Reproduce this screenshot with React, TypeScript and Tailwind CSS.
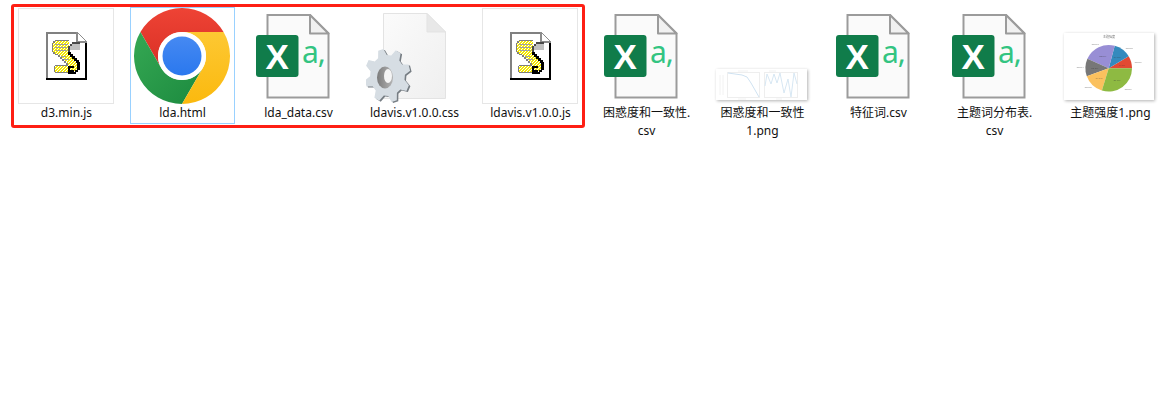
const cjk = "font-['Noto_Sans','Noto_Sans_CJK_SC',sans-serif]";

type Kind = "script" | "chrome" | "excel" | "gear" | "plots" | "pie";

const files: { kind: Kind; lines: string[] }[] = [
  { kind: "script", lines: ["d3.min.js"] },
  { kind: "chrome", lines: ["lda.html"] },
  { kind: "excel", lines: ["lda_data.csv"] },
  { kind: "gear", lines: ["ldavis.v1.0.0.css"] },
  { kind: "script", lines: ["ldavis.v1.0.0.js"] },
  { kind: "excel", lines: ["困惑度和一致性.", "csv"] },
  { kind: "plots", lines: ["困惑度和一致性", "1.png"] },
  { kind: "excel", lines: ["特征词.csv"] },
  { kind: "excel", lines: ["主题词分布表.", "csv"] },
  { kind: "pie", lines: ["主题强度1.png"] },
];

function ScriptIcon() {
  return (
    <div className="h-[96px] w-[96px] border border-[#e6e6e6] bg-white">
      <svg width="94" height="94" viewBox="1 1 94 94" shapeRendering="crispEdges">
        <defs>
          <pattern id="dither" width="3" height="3" patternUnits="userSpaceOnUse">
            <rect width="3" height="3" fill="#ffffff" />
            <rect width="2" height="1" fill="#f5e900" />
            <rect x="2" y="1" width="1" height="1" fill="#f5e900" />
            <rect y="1" width="1" height="1" fill="#f5e900" />
            <rect x="1" y="2" width="2" height="1" fill="#f5e900" />
          </pattern>
        </defs>
        {/* page */}
        <path d="M28 24H59L69 34V72H28Z" fill="#ffffff" />
        <path d="M28 24H59V26H30V70H28Z" fill="#808080" />
        <path d="M67 34H69V72H28V70H67Z" fill="#000000" />
        <path d="M59 24H60V25H61V26H62V27H63V28H64V29H65V30H66V31H67V32H68V33H69V35H58V24Z" fill="#8c8c8c" />
        <path d="M60 26H61V27H62V28H63V29H64V30H65V31H66V32H67V33H60Z" fill="#ffffff" />
        {/* scroll body */}
        <path d="M35 33H51V44L60 54V64H37V58H50V56L40 46H35Z" fill="url(#dither)" />
        <path d="M37 36H50V37H37ZM37 39H49V40H37ZM38 42H49V43H38ZM43 48H48V49H43ZM46 51H51V52H46Z" fill="#a0a0a0" />
        <path d="M37 32H51V33H37ZM35 33H37V35H35ZM34 35H35V44H34ZM35 44H37V46H35ZM37 46H40V47H37ZM40 47H42V49H40ZM42 49H44V51H42ZM44 51H46V53H44ZM46 53H48V55H46ZM48 55H50V57H48ZM37 57H50V58H37ZM36 58H37V64H36ZM37 64H50V65H37Z" fill="#808080" />
        {/* curl at the top right */}
        <path d="M52 38H54V36H62V42H52Z" fill="#c0c0c0" />
        <path d="M50 38H52V36H54V34H62V36H54V38H52V45H50Z" fill="#4a4a4a" />
        {/* black edge of the S */}
        <path d="M50 44H53V46H55V48H57V50H59V52H61V54H62V62H60V64H58V66H50V64H57V62H59V55H58V53H56V51H54V49H52V47H50Z" fill="#000000" />
        <path d="M50 58H56V60H52V62H56V64H50Z" fill="#000000" />
      </svg>
    </div>
  );
}

function ChromeIcon() {
  const c = 48;
  const dx = 41.57;
  const ix = 20.78;
  return (
    <svg width="96" height="96" viewBox="0 0 96 96">
      <defs>
        <linearGradient id="chromeRed" x1="0" y1="0" x2="0" y2="1">
          <stop offset="0" stopColor="#ee4335" />
          <stop offset="1" stopColor="#d93025" />
        </linearGradient>
        <linearGradient id="chromeGreen" x1="0" y1="0" x2="1" y2="1">
          <stop offset="0" stopColor="#35a853" />
          <stop offset="1" stopColor="#1c8a3f" />
        </linearGradient>
        <linearGradient id="chromeYellow" x1="0" y1="0" x2="0" y2="1">
          <stop offset="0" stopColor="#fdc833" />
          <stop offset="1" stopColor="#fbb90e" />
        </linearGradient>
        <linearGradient id="chromeBlue" x1="0" y1="0" x2="0" y2="1">
          <stop offset="0" stopColor="#4689f2" />
          <stop offset="1" stopColor="#2a78ee" />
        </linearGradient>
      </defs>
      <path
        d={`M${c - dx} ${c - 24}A48 48 0 0 1 ${c + dx} ${c - 24}L${c} ${c - 24}A24 24 0 0 0 ${c - ix} ${c + 12}Z`}
        fill="url(#chromeRed)"
      />
      <path
        d={`M${c - dx} ${c - 24}A48 48 0 0 0 ${c} ${c + 48}L${c + ix} ${c + 12}A24 24 0 0 1 ${c - ix} ${c + 12}Z`}
        fill="url(#chromeGreen)"
      />
      <path
        d={`M${c + dx} ${c - 24}A48 48 0 0 1 ${c} ${c + 48}L${c + ix} ${c + 12}A24 24 0 0 0 ${c} ${c - 24}Z`}
        fill="url(#chromeYellow)"
      />
      <circle cx={c} cy={c} r="24" fill="#ffffff" />
      <circle cx={c} cy={c} r="19.5" fill="url(#chromeBlue)" />
    </svg>
  );
}

function ExcelIcon() {
  return (
    <svg width="96" height="96" viewBox="0 0 96 96">
      <path d="M17.5 7H60L78.5 25.5V89.5H17.5Z" fill="#fafafa" stroke="#9b9b9b" strokeWidth="2" />
      <path d="M60 7V25.5H78.5Z" fill="#f1f1f1" stroke="#9b9b9b" strokeWidth="2" strokeLinejoin="round" />
      <rect x="6" y="27" width="42.5" height="42" rx="3" fill="#107c4a" />
      <text
        x="27.3"
        y="60.5"
        textAnchor="middle"
        className="fill-white font-['Liberation_Sans',sans-serif] text-[35px] font-bold"
      >
        X
      </text>
      <text
        x="52"
        y="55"
        className="fill-[#33c481] font-['Noto_Sans',sans-serif] text-[30px] tracking-[-1px]"
      >
        a,
      </text>
    </svg>
  );
}

function gearPath(cx: number, cy: number, outer: number, inner: number, teeth: number) {
  const pts: string[] = [];
  const step = (Math.PI * 2) / teeth;
  for (let i = 0; i < teeth; i++) {
    const a = i * step - Math.PI / 2 - 0.18;
    const offs: [number, number][] = [
      [-0.5, inner],
      [-0.3, outer],
      [0.0, outer],
      [0.18, inner],
    ];
    offs.forEach(([o, r]) => {
      const t = a + o * step;
      pts.push(`${(cx + Math.cos(t) * r * 0.85).toFixed(1)} ${(cy + Math.sin(t) * r).toFixed(1)}`);
    });
  }
  return `M${pts.join("L")}Z`;
}

function GearIcon() {
  return (
    <svg width="96" height="96" viewBox="0 0 96 96">
      <defs>
        <linearGradient id="pageFill" x1="0" y1="0" x2="1" y2="1">
          <stop offset="0" stopColor="#fbfbfb" />
          <stop offset="1" stopColor="#efefef" />
        </linearGradient>
        <linearGradient id="holeFill" x1="0" y1="0" x2="1" y2="0">
          <stop offset="0" stopColor="#7c7c7c" />
          <stop offset="1" stopColor="#b4b4b4" />
        </linearGradient>
      </defs>
      <path d="M17.5 5.5H61L79.5 24V90.5H17.5Z" fill="url(#pageFill)" stroke="#e3e3e3" />
      <path d="M61 5.5V24H79.5Z" fill="#e8e8e8" stroke="#e3e3e3" />
      <path d={gearPath(23, 68.5, 27, 20.5, 8)} fill="#767d83" />
      <path d={gearPath(21.5, 67.5, 27, 20.5, 8)} fill="#d6dde3" />
      <ellipse cx="19" cy="69.5" rx="8" ry="11" fill="url(#holeFill)" />
      <ellipse cx="22" cy="68" rx="4" ry="7" fill="#f4f4f4" />
    </svg>
  );
}

function PlotsThumb() {
  return (
    <div className="mr-[1px] bg-white shadow-[1px_1px_3px_rgba(0,0,0,0.3)]">
      <svg width="91" height="31" viewBox="0 0 91 31" className="blur-[0.4px]">
        <rect x="11.5" y="3.5" width="32" height="25" fill="none" stroke="#eeeeee" />
        <rect x="48.5" y="3.5" width="33" height="25" fill="none" stroke="#eeeeee" />
        <path d="M12 4L19 5L26 6L31 8L35 14L39 21L43 28" fill="none" stroke="#cfe2f1" />
        <path d="M49 17L51 5L55 15L58 5L61 14L64 4L68 24L72 10L75 28L78 4L81 15" fill="none" stroke="#d7e7f3" />
        <path d="M4 6V26M7 6V26M53 2H60M22 2H32M22 30H30M60 30H66" stroke="#f2f2f2" />
      </svg>
    </div>
  );
}

function slice(cx: number, cy: number, r: number, from: number, to: number) {
  const p = (deg: number) =>
    `${(cx + Math.cos((deg * Math.PI) / 180) * r).toFixed(2)} ${(cy - Math.sin((deg * Math.PI) / 180) * r).toFixed(2)}`;
  const large = to - from > 180 ? 1 : 0;
  return `M${cx} ${cy}L${p(from)}A${r} ${r} 0 ${large} 0 ${p(to)}Z`;
}

const pieSlices = [
  { from: 0, to: 31, color: "#e24a33", pct: "6.4%" },
  { from: 31, to: 75, color: "#348abd", pct: "14.3%" },
  { from: 75, to: 156, color: "#988ed5", pct: "22.5%" },
  { from: 156, to: 200, color: "#777777", pct: "12.1%" },
  { from: 200, to: 253, color: "#fbc15e", pct: "14.7%" },
  { from: 253, to: 360, color: "#8eba42", pct: "29.7%" },
];

const pieLabels = [
  { x: 74, y: 30, text: "Topic1" },
  { x: 65, y: 16, text: "Topic2" },
  { x: 31, y: 12, text: "Topic3" },
  { x: 16, y: 35, text: "Topic4" },
  { x: 24, y: 55, text: "Topic5" },
  { x: 64, y: 57, text: "Topic6" },
];

function PieThumb() {
  const cx = 44.7;
  const cy = 35.3;
  return (
    <div className="mr-[2px] bg-white shadow-[1px_1px_3px_rgba(0,0,0,0.3)]">
      <svg width="90" height="67" viewBox="0 0 90 67" className="blur-[0.4px]">
        <text x="45" y="4.5" textAnchor="middle" className={`fill-[#777777] text-[3px] ${cjk}`}>
          主题强度
        </text>
        {pieSlices.map((s) => {
          const mid = (((s.from + s.to) / 2) * Math.PI) / 180;
          return (
            <g key={s.from}>
              <path d={slice(cx, cy, 23.3, s.from, s.to)} fill={s.color} />
              <text
                x={cx + Math.cos(mid) * 14}
                y={cy - Math.sin(mid) * 14 + 1}
                textAnchor="middle"
                className="fill-[#333333] font-['Liberation_Sans',sans-serif] text-[2.5px] opacity-60"
              >
                {s.pct}
              </text>
            </g>
          );
        })}
        {pieLabels.map((l) => (
          <text
            key={l.text}
            x={l.x}
            y={l.y}
            textAnchor="middle"
            className="fill-[#888888] font-['Liberation_Sans',sans-serif] text-[2.5px]"
          >
            {l.text}
          </text>
        ))}
      </svg>
    </div>
  );
}

function FileIcon({ kind }: { kind: Kind }) {
  if (kind === "script") return <ScriptIcon />;
  if (kind === "chrome") return <ChromeIcon />;
  if (kind === "excel") return <ExcelIcon />;
  if (kind === "gear") return <GearIcon />;
  if (kind === "plots") return <PlotsThumb />;
  return <PieThumb />;
}

export default function App() {
  return (
    <div className={`relative h-[402px] w-[1176px] overflow-hidden bg-white ${cjk}`}>
      {/* File grid */}
      <div className="flex pl-2 pt-[7px]">
        {files.map((file, i) => (
          <div key={i} className="w-[116px] shrink-0 pl-[6px]">
            <div
              className={`min-h-[117px] w-[105px] border ${
                file.kind === "chrome" ? "border-[#99d1ff]" : "border-transparent"
              }`}
            >
              <div className="ml-[3px] flex h-[96px] w-[96px] items-end justify-center">
                <div className={file.kind === "plots" || file.kind === "pie" ? "mb-[4px]" : ""}>
                  <FileIcon kind={file.kind} />
                </div>
              </div>
              <div className="text-center text-[12px] leading-[18px] text-[#111111]">
                {file.lines.map((line) => (
                  <div key={line} className="whitespace-nowrap">
                    {line}
                  </div>
                ))}
              </div>
            </div>
          </div>
        ))}
      </div>

      {/* Red annotation drawn over the first five files */}
      <div className="absolute left-[11px] top-[4px] h-[124px] w-[574px] rounded-[3px] border-[3px] border-[#fe1f14]" />
    </div>
  );
}
